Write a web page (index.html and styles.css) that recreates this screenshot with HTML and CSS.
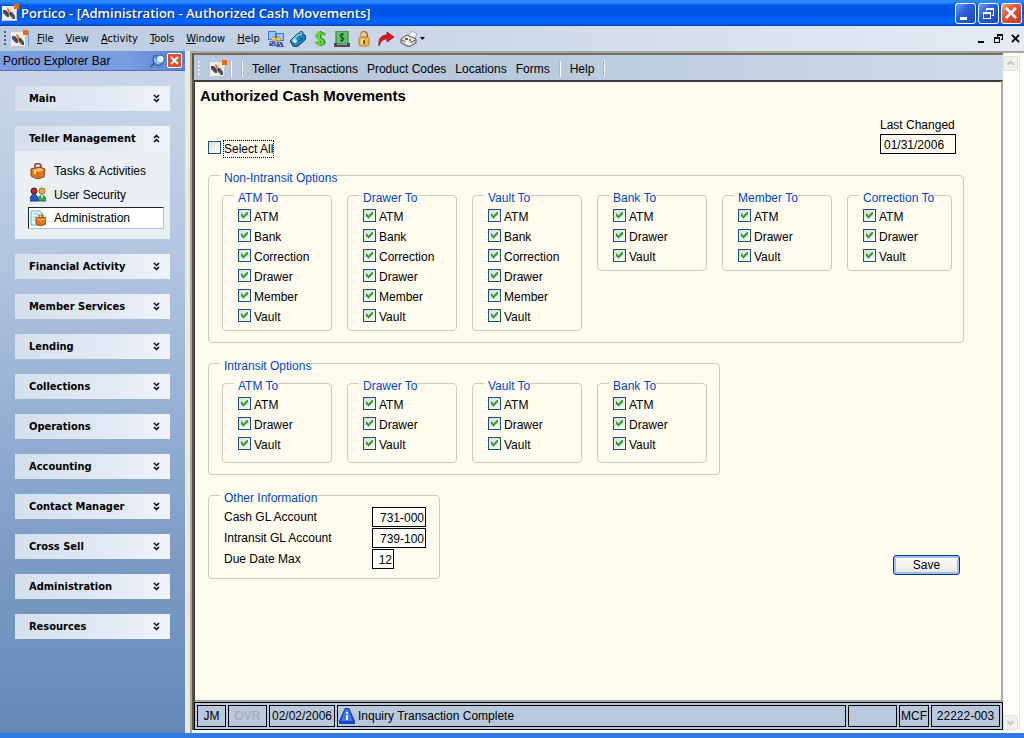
FILE: index.html
```html
<!DOCTYPE html>
<html lang="en">
<head>
  <meta charset="UTF-8">
  <meta name="viewport" content="width=device-width, initial-scale=1.0">
  <title>Portico - [Administration - Authorized Cash Movements]</title>
  <link rel="stylesheet" href="styles.css">
</head>
<body>
  <svg class="defs" aria-hidden="true">
    <symbol id="logo" viewBox="0 0 18 18">
      <path d="M1 2h15v15H1z" fill="#f1eeea"/>
      <path d="M2 16h14v1H2zM15 6h1v11h-1z" fill="#c3c5cb"/>
      <path d="M2 6h3l3 4v3H6L2 9zM9 8h2l3 4v3h-2l-3-3z" fill="#3c5077"/>
      <path d="M6 4l2 1 2 4 2 5-3-2-2-3z" fill="#f07818"/>
      <path d="M5 7l1 1 1 3-1-1zM9 8l1 1 1 4-2-2z" fill="#2a2430"/>
      <path d="M13 0h5v5h-5z" fill="#ff6600"/>
    </symbol>
    <symbol id="down" viewBox="0 0 7 9">
      <path d="M1 1l2.500 2.500L6 1M1 5l2.500 2.500L6 5" fill="none" stroke="#000" stroke-width="1.500"/>
    </symbol>
    <symbol id="up" viewBox="0 0 7 9">
      <path d="M1 4l2.500-2.500L6 4M1 8l2.500-2.500L6 8" fill="none" stroke="#000" stroke-width="1.500"/>
    </symbol>
  </svg>

  <header class="titlebar">
    <svg class="logo"><use href="#logo"/></svg>
    <h1>Portico - [Administration - Authorized Cash Movements]</h1>
    <div class="window-buttons">
      <button class="win-btn" aria-label="Minimize"><svg viewBox="0 0 19 19"><path d="M4 13h7v3H4z" fill="#fff"/></svg></button>
      <button class="win-btn" aria-label="Restore"><svg viewBox="0 0 19 19"><path d="M7 4h8v8h-2v-1h1V6H8v1H7zM4 8h8v7H4zM5 10v4h6v-4z" fill="#fff" fill-rule="evenodd"/></svg></button>
      <button class="win-btn close" aria-label="Close"><svg viewBox="0 0 19 19"><path d="M4 4l10 10M14 4L4 14" stroke="#fff" stroke-width="2.500"/></svg></button>
    </div>
  </header>

  <nav class="menubar">
    <span class="grip"></span>
    <svg class="logo"><use href="#logo"/></svg>
    <span class="sep"></span>
    <div class="menus">
      <a href="#"><u>F</u>ile</a>
      <a href="#"><u>V</u>iew</a>
      <a href="#"><u>A</u>ctivity</a>
      <a href="#"><u>T</u>ools</a>
      <a href="#"><u>W</u>indow</a>
      <a href="#"><u>H</u>elp</a>
    </div>
    <div class="tools">
      <button aria-label="Transfer"><svg viewBox="0 0 16 16">
        <path d="M0 0h8v9H0zM8 2h8v8H8z" fill="#3f78cb"/><path d="M1 1h6v7H1zM9 3h6v6H9z" fill="#91c9ff"/>
        <path d="M2 10h5l1 5H1zM9 11h5l2 5H8z" fill="#4c5ca8"/><path d="M3 11h1v1H3zM5 13h1v1H5zM11 12h1v1h-1zM12 14h1v1h-1z" fill="#fff"/>
        <path d="M3 8l3-3v2h4V5l3 3-3 3V9H6v2z" fill="#f8c840" stroke="#a87820" stroke-width=".5"/></svg></button>
      <button aria-label="Tag"><svg viewBox="0 0 16 16">
        <path d="M0 10l7-7 5-1 4 3-1 4-8 7-4-1z" fill="#1685b8" stroke="#0a3f69"/><path d="M2 10l6-6 4-1" fill="none" stroke="#61d2ee" stroke-width="2"/>
        <circle cx="5" cy="10" r="2" fill="#f6d8f5"/><path d="M9 3c0-3 4-4 4-1M9 10l4-3" fill="none" stroke="#0a3f69"/></svg></button>
      <button aria-label="Cash"><svg viewBox="0 0 16 16">
        <path d="M13 4C11 1 5 2 5 5s7 3 7 6-6 3-8 0M8 0v15" fill="none" stroke="#2e8b28" stroke-width="3"/>
        <path d="M12 4C10 1 4 2 4 5s7 3 7 6-6 3-8 0M7 0v15" fill="none" stroke="#68d83e" stroke-width="2"/></svg></button>
      <button aria-label="Bill"><svg viewBox="0 0 16 16">
        <path d="M2 0h12v13H2z" fill="#5fc468" stroke="#2b7a39"/><path d="M0 12h3v2h10v-2h3v4H0z" fill="#4b4b50"/>
        <path d="M10 4C8 2 6 3 6 5c0 2 4 1 4 3s-3 2-4 1M8 2v9" fill="none" stroke="#103b19"/></svg></button>
      <button aria-label="Lock"><svg viewBox="0 0 16 16">
        <path d="M5 7V4c0-4 6-4 6 0v3" fill="none" stroke="#b9731e" stroke-width="2"/><path d="M5 6V4c0-3 5-3 5 0" fill="none" stroke="#ffe7a0"/>
        <rect x="3" y="6" width="10" height="9" rx="2" fill="#f1b34e" stroke="#bd7621"/><path d="M5 8h3v5H5z" fill="#ffe0a0"/><path d="M7 9h2v4H7z" fill="#925318"/></svg></button>
      <button aria-label="Send"><svg viewBox="0 0 16 16">
        <path d="M1 15C0 7 4 4 9 4V1l7 5-7 5V8C5 8 3 10 1 15z" fill="#df171c" stroke="#930911" stroke-width=".7"/></svg></button>
      <button class="print" aria-label="Print"><svg viewBox="0 0 25 16">
        <path d="M8 5l4-5 5 3-3 6z" fill="#fff" stroke="#999"/><path d="M1 8l6-4 9 4v4l-7 4-8-4z" fill="#cfcfcb" stroke="#555"/>
        <path d="M2 8l5-3 8 4-6 2z" fill="#eee"/><path d="M1 9l8 3 7-3" fill="none" stroke="#666"/><path d="M4 11l5 3 3-1-5-3z" fill="#fff"/><path d="M5 7h3v2H5z" fill="#d83230"/><path d="M9 8h2v2H9z" fill="#41a643"/>
        <path d="M20 6h5l-2.500 3z" fill="#000"/></svg></button>
    </div>
    <div class="mdi-buttons">
      <button aria-label="Minimize document"><svg viewBox="0 0 9 9"><path d="M1 7h6v2H1z"/></svg></button>
      <button aria-label="Restore document"><svg viewBox="0 0 9 9"><path d="M3 0h6v6H7V5h1V2H4v1H3zM0 3h6v6H0zM1 5v3h4V5z" fill-rule="evenodd"/></svg></button>
      <button aria-label="Close document"><svg viewBox="0 0 9 9"><path d="M1 1l7 7M8 1L1 8" stroke="#000" stroke-width="1.800"/></svg></button>
    </div>
  </nav>

  <div class="workspace">
    <aside class="explorer">
      <div class="explorer-title">
        <span>Portico Explorer Bar</span>
        <button class="pin" aria-label="Pin"><svg viewBox="0 0 16 14">
          <path d="M1 13l5-5" stroke="#33568f" stroke-width="2"/><path d="M3 4c0-3 3-4 6-2 2-3 5-1 6 1 1 4-1 8-5 9-4 0-7-3-7-8z" fill="#4f84cf" stroke="#315a9c"/>
          <circle cx="11" cy="5" r="3.500" fill="#d7efff"/><path d="M5 4l1 4 4 2" fill="none" stroke="#9bcaf5" stroke-width="2"/></svg></button>
        <button class="close-bar" aria-label="Close explorer bar"><svg viewBox="0 0 13 13"><path d="M3 3l7 7M10 3l-7 7" stroke="#fff" stroke-width="2"/></svg></button>
      </div>
      <div class="groups">
        <section><button class="group-head">Main <svg><use href="#down"/></svg></button></section>
        <section>
          <button class="group-head">Teller Management <svg><use href="#up"/></svg></button>
          <div class="group-items">
            <a href="#"><svg viewBox="0 0 16 16">
              <path d="M5 5V2c1-2 6-2 6 1v3" fill="none" stroke="#a32a20" stroke-width="1.500"/><path d="M1 6l9-2 5 2-1 8-7 2-6-3z" fill="#df7921" stroke="#8a4212"/>
              <path d="M2 7l6 2 6-2-4-2z" fill="#ffc36c"/><path d="M8 9v6" stroke="#b35c1a"/><path d="M4 8h2v3H4z" fill="#ffe193"/></svg>Tasks &amp; Activities</a>
            <a href="#"><svg viewBox="0 0 16 16">
              <circle cx="4" cy="4" r="3" fill="#c4291e" stroke="#4a1717"/><path d="M0 14c0-9 8-9 8 0z" fill="#2558c8" stroke="#173a83"/>
              <circle cx="12" cy="4" r="3" fill="#f1ad48" stroke="#a76722"/><path d="M8 14c0-8 8-8 8 0z" fill="#38a848" stroke="#24713c"/><path d="M11 8h2l-1 4z" fill="#fff"/></svg>User Security</a>
            <a href="#" class="selected"><svg viewBox="0 0 16 16">
              <path d="M1 1h9l3 3v11H1z" fill="#e8f4fc" stroke="#6ba3c8"/><path d="M3 4h6M3 7h4M3 10h2" stroke="#88bedc"/>
              <path d="M9 8V5h4v3" fill="none" stroke="#a34b18"/><path d="M6 8l6-1 4 1v6l-6 2-4-2z" fill="#dd7923" stroke="#914712"/><path d="M7 9l4 1 4-1" stroke="#ffc06a" fill="none"/></svg>Administration</a>
          </div>
        </section>
        <section><button class="group-head">Financial Activity <svg><use href="#down"/></svg></button></section>
        <section><button class="group-head">Member Services <svg><use href="#down"/></svg></button></section>
        <section><button class="group-head">Lending <svg><use href="#down"/></svg></button></section>
        <section><button class="group-head">Collections <svg><use href="#down"/></svg></button></section>
        <section><button class="group-head">Operations <svg><use href="#down"/></svg></button></section>
        <section><button class="group-head">Accounting <svg><use href="#down"/></svg></button></section>
        <section><button class="group-head">Contact Manager <svg><use href="#down"/></svg></button></section>
        <section><button class="group-head">Cross Sell <svg><use href="#down"/></svg></button></section>
        <section><button class="group-head">Administration <svg><use href="#down"/></svg></button></section>
        <section><button class="group-head">Resources <svg><use href="#down"/></svg></button></section>
      </div>
    </aside>

    <main class="frame">
      <div class="document">
        <nav class="doc-menu">
          <span class="grip"></span>
          <svg class="logo"><use href="#logo"/></svg>
          <span class="sep"></span>
          <span class="sep"></span>
          <a href="#">Teller</a>
          <a href="#">Transactions</a>
          <a href="#">Product Codes</a>
          <a href="#">Locations</a>
          <a href="#">Forms</a>
          <span class="sep"></span>
          <a href="#">Help</a>
          <span class="sep"></span>
        </nav>

        <form class="page">
          <h2>Authorized Cash Movements</h2>
          <div class="top-row">
            <label class="check select-all"><input type="checkbox"><span>Select All</span></label>
            <div class="last-changed">
              <label for="changed">Last Changed</label>
              <input id="changed" type="text" value="01/31/2006">
            </div>
          </div>

          <fieldset class="options">
            <legend>Non-Intransit Options</legend>
            <div class="option-row">
              <fieldset>
                <legend>ATM To</legend>
                <label class="check"><input type="checkbox" checked>ATM</label>
                <label class="check"><input type="checkbox" checked>Bank</label>
                <label class="check"><input type="checkbox" checked>Correction</label>
                <label class="check"><input type="checkbox" checked>Drawer</label>
                <label class="check"><input type="checkbox" checked>Member</label>
                <label class="check"><input type="checkbox" checked>Vault</label>
              </fieldset>
              <fieldset>
                <legend>Drawer To</legend>
                <label class="check"><input type="checkbox" checked>ATM</label>
                <label class="check"><input type="checkbox" checked>Bank</label>
                <label class="check"><input type="checkbox" checked>Correction</label>
                <label class="check"><input type="checkbox" checked>Drawer</label>
                <label class="check"><input type="checkbox" checked>Member</label>
                <label class="check"><input type="checkbox" checked>Vault</label>
              </fieldset>
              <fieldset>
                <legend>Vault To</legend>
                <label class="check"><input type="checkbox" checked>ATM</label>
                <label class="check"><input type="checkbox" checked>Bank</label>
                <label class="check"><input type="checkbox" checked>Correction</label>
                <label class="check"><input type="checkbox" checked>Drawer</label>
                <label class="check"><input type="checkbox" checked>Member</label>
                <label class="check"><input type="checkbox" checked>Vault</label>
              </fieldset>
              <fieldset>
                <legend>Bank To</legend>
                <label class="check"><input type="checkbox" checked>ATM</label>
                <label class="check"><input type="checkbox" checked>Drawer</label>
                <label class="check"><input type="checkbox" checked>Vault</label>
              </fieldset>
              <fieldset>
                <legend>Member To</legend>
                <label class="check"><input type="checkbox" checked>ATM</label>
                <label class="check"><input type="checkbox" checked>Drawer</label>
                <label class="check"><input type="checkbox" checked>Vault</label>
              </fieldset>
              <fieldset class="narrow">
                <legend>Correction To</legend>
                <label class="check"><input type="checkbox" checked>ATM</label>
                <label class="check"><input type="checkbox" checked>Drawer</label>
                <label class="check"><input type="checkbox" checked>Vault</label>
              </fieldset>
            </div>
          </fieldset>

          <fieldset class="options intransit">
            <legend>Intransit Options</legend>
            <div class="option-row">
              <fieldset>
                <legend>ATM To</legend>
                <label class="check"><input type="checkbox" checked>ATM</label>
                <label class="check"><input type="checkbox" checked>Drawer</label>
                <label class="check"><input type="checkbox" checked>Vault</label>
              </fieldset>
              <fieldset>
                <legend>Drawer To</legend>
                <label class="check"><input type="checkbox" checked>ATM</label>
                <label class="check"><input type="checkbox" checked>Drawer</label>
                <label class="check"><input type="checkbox" checked>Vault</label>
              </fieldset>
              <fieldset>
                <legend>Vault To</legend>
                <label class="check"><input type="checkbox" checked>ATM</label>
                <label class="check"><input type="checkbox" checked>Drawer</label>
                <label class="check"><input type="checkbox" checked>Vault</label>
              </fieldset>
              <fieldset>
                <legend>Bank To</legend>
                <label class="check"><input type="checkbox" checked>ATM</label>
                <label class="check"><input type="checkbox" checked>Drawer</label>
                <label class="check"><input type="checkbox" checked>Vault</label>
              </fieldset>
            </div>
          </fieldset>

          <div class="bottom-row">
            <fieldset class="other">
              <legend>Other Information</legend>
              <div class="field-grid">
                <label for="cash-gl">Cash GL Account</label>
                <input id="cash-gl" type="text" value="731-000">
                <label for="intransit-gl">Intransit GL Account</label>
                <input id="intransit-gl" type="text" value="739-100">
                <label for="due-max">Due Date Max</label>
                <input id="due-max" class="short" type="text" value="12">
              </div>
            </fieldset>
            <button class="save" type="button">Save</button>
          </div>
        </form>

        <footer class="statusbar">
          <span class="user">JM</span>
          <span class="ovr">OVR</span>
          <span class="date">02/02/2006</span>
          <span class="message"><svg viewBox="0 0 16 16">
            <path d="M6 0h4l2 4 4 9v3H0v-3l4-9z" fill="#1746b8"/><path d="M7 1h2l2 5 3 7H2l3-8z" fill="#3f7cf0"/>
            <path d="M7 4h2v2H7zM7 7h2v5H7z" fill="#e6f0ff"/></svg>Inquiry Transaction Complete</span>
          <span class="blank"></span>
          <span class="code">MCF</span>
          <span class="number">22222-003</span>
        </footer>
      </div>

      <div class="scrollbar">
        <button aria-label="Scroll up"><svg viewBox="0 0 15 15"><path d="M4 9l3.500-3.500L11 9" fill="none" stroke="#c9c7ba" stroke-width="2.500"/></svg></button>
        <button aria-label="Scroll down"><svg viewBox="0 0 15 15"><path d="M4 6l3.500 3.500L11 6" fill="none" stroke="#c9c7ba" stroke-width="2.500"/></svg></button>
      </div>
    </main>
  </div>
</body>
</html>
```
FILE: styles.css
```css
* {
  margin: 0;
  padding: 0;
  box-sizing: border-box;
}
body {
  min-height: 100vh;
  display: flex;
  flex-direction: column;
  font-family: "Liberation Sans", Arial, sans-serif;
  font-size: 12px;
  line-height: 16px;
  color: #000;
  background: #ece9d8;
  border-bottom: 5px solid #2f7ae5;
}
a {
  color: #000;
  text-decoration: none;
}
button {
  border: none;
  background: none;
  font: inherit;
  color: inherit;
}
svg {
  display: block;
  flex: none;
}
.defs {
  position: absolute;
  width: 0;
  height: 0;
}
.logo {
  width: 18px;
  height: 18px;
}

/* title bar */
.titlebar {
  height: 26px;
  display: flex;
  align-items: center;
  gap: 2px;
  padding: 0 2px 0 1px;
  background: linear-gradient(#2f8cff 0, #2584fb 3px, #0058e6 5px, #0055e3 14px, #0366ff 20px, #0364fb 23px, #0040b8 26px);
}
.titlebar h1 {
  flex: 1;
  font-family: "Open Sans", "Noto Sans", sans-serif;
  font-size: 13px;
  font-weight: 600;
  color: #fff;
  text-shadow: 1px 1px 0 #0a2f8c;
  white-space: nowrap;
}
.window-buttons {
  display: flex;
  gap: 2px;
}
.win-btn {
  width: 21px;
  height: 21px;
  border: 1px solid #fff;
  border-radius: 3px;
  background: linear-gradient(135deg, #6f9cf4, #2b60dc 40%, #1c49bc);
}
.win-btn svg {
  width: 19px;
  height: 19px;
}
.win-btn.close {
  background: linear-gradient(135deg, #efa58a, #e0563a 40%, #c53a18);
}

/* main menu */
.menubar {
  height: 25px;
  display: flex;
  align-items: center;
  padding: 0 4px;
  background: linear-gradient(90deg, #b9cae1, #cfdaea 50%, #e4ebf4);
}
.grip {
  width: 2px;
  height: 15px;
  background: repeating-linear-gradient(#51607d 0, #51607d 2px, transparent 2px, transparent 4px);
}
.menubar .logo {
  margin-left: 4px;
}
.sep {
  width: 2px;
  height: 16px;
  border-left: 1px solid #aab4c2;
  border-right: 1px solid #fff;
}
.menubar .sep {
  border-left-color: #7b9bd0;
  border-right: none;
}
.menus {
  display: flex;
  gap: 12px;
  margin-left: 7px;
  font-family: "DejaVu Sans Condensed", "DejaVu Sans", sans-serif;
  font-size: 11px;
}
.tools {
  display: flex;
  gap: 6px;
  margin-left: 8px;
}
.tools svg {
  width: 16px;
  height: 16px;
}
.tools .print svg {
  width: 25px;
}
.mdi-buttons {
  display: flex;
  gap: 8px;
  margin-left: auto;
}
.mdi-buttons svg {
  width: 9px;
  height: 9px;
}

.workspace {
  flex: 1;
  display: flex;
}

/* explorer bar */
.explorer {
  width: 185px;
  flex: none;
  background: linear-gradient(#cbd8ea, #b2c6e0 30%, #7b9bc5 75%, #6489b7);
}
.explorer-title {
  height: 20px;
  display: flex;
  align-items: center;
  gap: 2px;
  padding: 0 3px;
  background: linear-gradient(90deg, #7c9ee0, #7a9ce0 70%, #5580d4);
  border-bottom: 1px solid #5572ad;
}
.explorer-title span {
  flex: 1;
}
.pin svg {
  width: 15px;
  height: 14px;
}
.close-bar {
  border: 1px solid #fff;
  border-radius: 2px;
  background: #dd4f30;
}
.close-bar svg {
  width: 13px;
  height: 13px;
}
.groups {
  display: flex;
  flex-direction: column;
  gap: 15px;
  padding: 15px;
}
.group-head {
  width: 100%;
  height: 25px;
  display: flex;
  align-items: center;
  justify-content: space-between;
  padding: 0 10px 0 14px;
  font-family: "DejaVu Sans Condensed", "DejaVu Sans", sans-serif;
  font-size: 11px;
  font-weight: 700;
  background: linear-gradient(90deg, #d5e0ec, #e2e9f4 60%, #eff3f9);
}
.group-head svg {
  width: 7px;
  height: 9px;
}
.group-items {
  padding: 8px 6px 10px 13px;
  background: #eaeff4;
}
.group-items a {
  height: 24px;
  display: flex;
  align-items: center;
  gap: 8px;
  padding-left: 1px;
  border: 1px solid transparent;
}
.group-items svg {
  width: 16px;
  height: 16px;
}
.group-items .selected {
  height: 22px;
  background: #fff;
  border-color: #222 #a9c3e4 #a9c3e4 #222;
}

/* document frame */
.frame {
  flex: 1;
  display: flex;
  margin-left: 5px;
  padding: 0 4px 3px 0;
  background: #fffefa;
  border-left: 2px solid #aca899;
  border-top: 2px solid #aca899;
}
.document {
  flex: 1;
  display: flex;
  flex-direction: column;
  border-left: 2px solid #55534c;
  border-top: 2px solid #716f64;
}
.doc-menu {
  height: 25px;
  display: flex;
  align-items: center;
  gap: 9px;
  padding: 2px 4px 0;
  background: linear-gradient(90deg, #b8c9de 40%, #cfdbea);
}
.doc-menu .grip {
  background: repeating-linear-gradient(#e6edf6 0, #e6edf6 2px, transparent 2px, transparent 4px);
}
.doc-menu .logo {
  margin-right: -6px;
}
.page {
  flex: 1;
  padding: 5px 36px 20px 13px;
  background: #fffbef;
  border-top: 2px solid #3c3c3a;
  border-left: 1px solid #3c3c3a;
  border-right: 2px solid #aca899;
  border-bottom: 2px solid #aca899;
}
.page h2 {
  margin-left: -8px;
  font-size: 15px;
  line-height: 18px;
}
.top-row {
  display: flex;
  justify-content: space-between;
  align-items: flex-end;
  margin: 12px 9px 8px 0;
}
.page input[type="text"] {
  height: 20px;
  border: 1px solid #000;
  background: #fffffb;
  padding: 2px 1px 0 3px;
  font: inherit;
}
.last-changed {
  display: flex;
  flex-direction: column;
  gap: 1px;
  margin-bottom: 3px;
}
.last-changed input[type="text"] {
  width: 76px;
  background: #fffbef;
}

.check {
  height: 20px;
  display: flex;
  align-items: center;
  gap: 3px;
}
.check input {
  appearance: none;
  width: 13px;
  height: 13px;
  margin-bottom: 4px;
  border: 1px solid #1c5180;
  background: linear-gradient(135deg, #dcdcd7, #fff);
}
/* stepped edges keep the tick crisp at this size */
.check input:checked::before {
  content: "";
  display: block;
  width: 7px;
  height: 7px;
  margin: 2px;
  background: #21a121;
  clip-path: polygon(0 2px, 1px 2px, 1px 3px, 2px 3px, 2px 4px, 3px 4px, 3px 3px, 4px 3px, 4px 2px, 5px 2px, 5px 1px, 6px 1px, 6px 0, 7px 0, 7px 3px, 6px 3px, 6px 4px, 5px 4px, 5px 5px, 4px 5px, 4px 6px, 3px 6px, 3px 7px, 2px 7px, 2px 6px, 1px 6px, 1px 5px, 0 5px);
}
.select-all {
  height: 17px;
  gap: 2px;
}
.select-all input {
  margin-bottom: 2px;
}
.select-all span {
  border: 1px dotted #000;
  padding-top: 1px;
  line-height: 15px;
}

fieldset {
  border: 1px solid #cdcbb9;
  border-radius: 4px;
}
legend {
  margin-left: -4px;
  padding: 6px 0 0 4px;
  line-height: 14px;
  color: #0046d5;
}
.options {
  width: fit-content;
  padding: 0 11px 11px 13px;
  margin-bottom: 10px;
}
.options > legend {
  margin-left: -2px;
}
.option-row {
  display: flex;
  align-items: flex-start;
  gap: 15px;
}
.option-row fieldset {
  width: 110px;
  padding: 2px 0 3px 15px;
}
.option-row .narrow {
  width: 105px;
}
.intransit {
  padding-right: 12px;
}
.intransit .option-row fieldset {
  padding-bottom: 7px;
}
.bottom-row {
  display: flex;
  justify-content: space-between;
  align-items: flex-end;
  margin-right: 5px;
}
.other {
  padding: 2px 13px 9px 15px;
}
.field-grid {
  display: grid;
  grid-template-columns: 148px 54px;
  align-items: center;
  row-gap: 1px;
}
.page .field-grid input {
  width: 54px;
  text-align: right;
}
.page .field-grid .short {
  width: 22px;
}
.save {
  width: 67px;
  height: 20px;
  margin-bottom: 4px;
  border: 1px solid #003c74;
  border-radius: 3px;
  background: linear-gradient(#fff, #f3f2ec 60%, #e6e5dc);
  box-shadow: inset 0 0 0 2px #a5c0f0;
}

/* status bar */
.statusbar {
  height: 28px;
  display: flex;
  gap: 2px;
  padding: 2px;
  background: #b8c9de;
  border: 1px solid #000;
}
.statusbar span {
  display: flex;
  align-items: center;
  justify-content: center;
  border: 1px solid #000;
  white-space: nowrap;
}
.statusbar .user {
  width: 29px;
}
.statusbar .ovr {
  width: 39px;
  color: #9fa6ac;
}
.statusbar .date {
  width: 66px;
}
.statusbar .message {
  flex: 1;
  justify-content: flex-start;
  gap: 3px;
  padding-left: 1px;
}
.statusbar svg {
  width: 16px;
  height: 16px;
}
.statusbar .blank {
  width: 49px;
}
.statusbar .code {
  width: 30px;
}
.statusbar .number {
  width: 69px;
}

.scrollbar {
  width: 17px;
  flex: none;
  display: flex;
  flex-direction: column;
  justify-content: space-between;
  padding: 3px 1px 0 0;
  border-right: 1px solid #ece9d8;
}
.scrollbar button {
  border: 1px solid #e3e1d3;
  border-radius: 2px;
  background: #f3f2ea;
}
.scrollbar svg {
  width: 13px;
  height: 13px;
}
```
